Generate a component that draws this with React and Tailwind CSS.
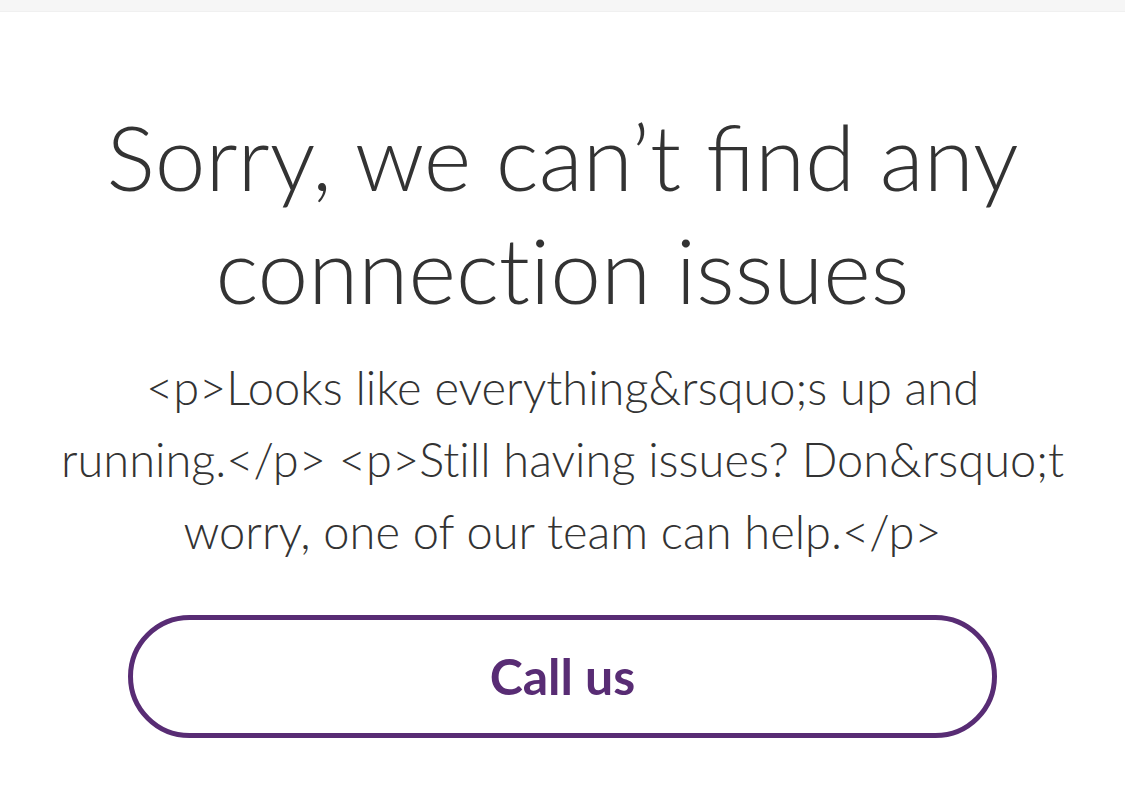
export default function App() {
  return (
    <div className="w-[1125px] h-[788px] bg-white overflow-hidden" style={{ fontFamily: 'Lato, "Open Sans", sans-serif' }}>
      <div className="h-[12px] bg-[#f6f6f6] border-b border-[#f0f0f0]" />
      <div className="flex flex-col items-center px-[30px] pt-[87px]">
        <h1 className="text-center text-[#333333] text-[91px] leading-[113px] font-light w-[960px]">
          Sorry, we can’t find any <span className="[font-variant-ligatures:none]">connection</span> issues
        </h1>
        <p className="mt-[26px] w-full text-center text-[#333333] text-[47px] leading-[72px] font-light whitespace-nowrap [font-variant-ligatures:none]">
          &lt;p&gt;Looks like everything&amp;rsquo;s up and
          <br />
          running.&lt;/p&gt; &lt;p&gt;Still having issues? Don&amp;rsquo;t
          <br />
          worry, one of our team can help.&lt;/p&gt;
        </p>
        <button className="mt-[48px] w-[869px] h-[123px] rounded-full border-[5px] border-[#582c74] text-[#582c74] text-[50px] font-bold bg-white">
          Call us
        </button>
      </div>
    </div>
  );
}
